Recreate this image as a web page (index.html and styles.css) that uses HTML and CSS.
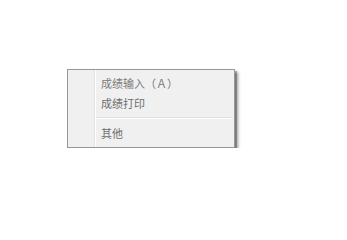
FILE: index.html
```html
<!DOCTYPE html>
<html lang="zh">
<head>
<meta charset="utf-8">
<link rel="stylesheet" href="styles.css">
</head>
<body>
<div class="menu">
  <div class="item item-first">成绩输入（Ａ）</div>
  <div class="item">成绩打印</div>
  <div class="sep"></div>
  <div class="item">其他</div>
</div>
</body>
</html>
```
FILE: styles.css
```css
html, body {
  margin: 0;
  padding: 0;
  background: #ffffff;
}
body {
  padding: 69px 0 0 67px;
  font-family: "Noto Sans CJK SC", "Noto Sans", sans-serif;
}
.menu {
  width: 166px;
  border: 1px solid #979797;
  padding: 3px 0 4px;
  background:
    linear-gradient(to right, transparent 26px, #e2e3e3 26px, #e2e3e3 27px, #ffffff 27px, #ffffff 28px, transparent 28px),
    #f0f0f0;
  box-shadow: 2px 2px 0 rgba(0, 0, 0, 0.22), 3px 3px 3px rgba(0, 0, 0, 0.4);
}
.item {
  height: 20px;
  line-height: 20px;
  padding-left: 33px;
  font-size: 11px;
  color: #6d6d6d;
  white-space: nowrap;
}
.item-first {
  color: #7a7a7a;
}
.sep {
  margin: 4px 2px 4px 28px;
  height: 1px;
  background: #e0e0e0;
  border-bottom: 1px solid #ffffff;
}
```
